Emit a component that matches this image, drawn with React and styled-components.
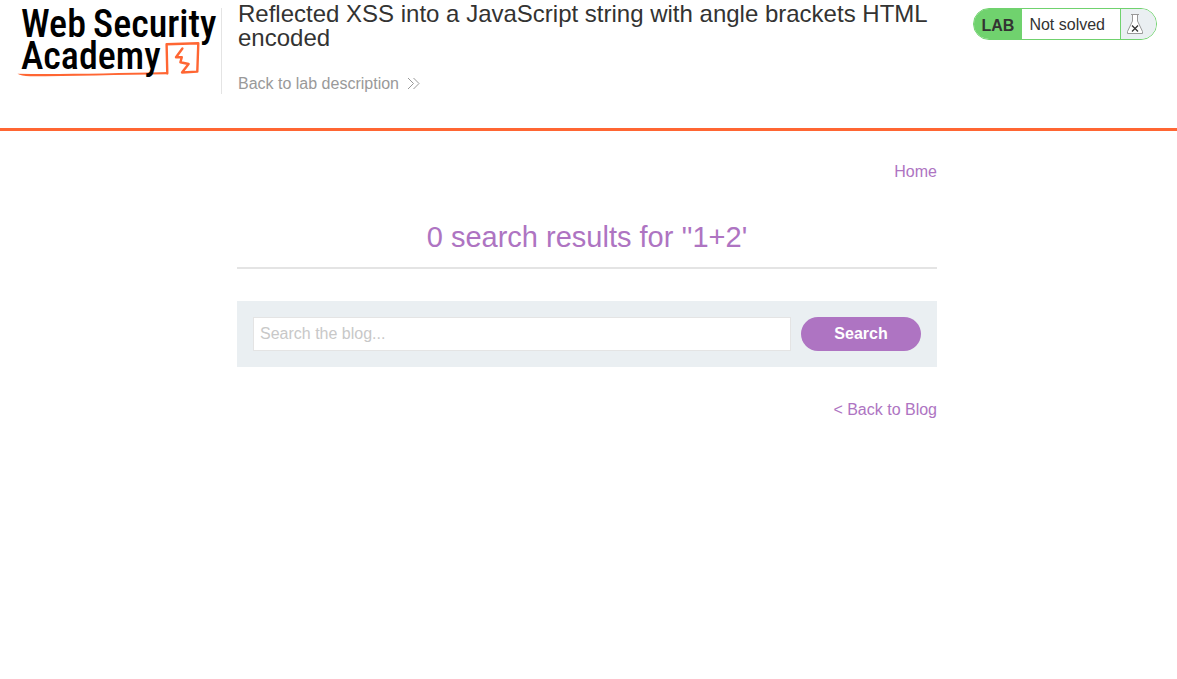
import React from 'react';
import styled, { createGlobalStyle } from 'styled-components';

const colors = {
  orange: '#ff6633',
  purple: '#ae74c2',
  green: '#70d26e',
  ink: '#333332',
  muted: '#999999',
  line: '#e4e4e4',
  panel: '#eaeff2',
};

const GlobalStyle = createGlobalStyle`
  *, *::before, *::after { box-sizing: border-box; }
  body {
    margin: 0;
    background: #fff;
    color: ${colors.ink};
    font-family: "Liberation Sans", Arial, sans-serif;
    font-size: 16px;
    line-height: 24px;
  }
`;

const Header = styled.header`
  display: flex;
  align-items: flex-start;
  min-height: 131px;
  padding: 0 20px 24px 16px;
  border-bottom: 3px solid ${colors.orange};
`;

const LogoLink = styled.a`
  flex: none;
  display: block;
  margin-top: 8px;
  border-right: 1px solid ${colors.line};
  color: #000;

  svg { display: block; overflow: visible; }
`;

const LogoText = styled.text`
  font-family: "Roboto Condensed", Roboto, "Liberation Sans Narrow", sans-serif;
  font-size: 38px;
  font-weight: 500;
  fill: currentColor;
`;

const TitleBlock = styled.div`
  flex: 1;
  min-width: 0;
  padding: 2px 32px 0 16px;
`;

const Title = styled.h2`
  margin: 0 0 22px;
  font-size: 24px;
  line-height: 24px;
  font-weight: 400;
`;

const DescriptionLink = styled.a`
  display: inline-flex;
  align-items: center;
  gap: 8px;
  color: ${colors.muted};
  text-decoration: none;
`;

const Status = styled.div`
  flex: none;
  display: flex;
  height: 32px;
  margin-top: 8px;
  overflow: hidden;
  border: 1px solid ${colors.green};
  border-radius: 16px;
  line-height: 32px;
`;

const StatusTag = styled.span`
  padding: 0 8px;
  background: ${colors.green};
  font-weight: 700;
  line-height: 34px;
`;

const StatusText = styled.p`
  margin: 0;
  padding: 0 15px 0 7px;
`;

const StatusIcon = styled.span`
  display: flex;
  align-items: center;
  width: 36px;
  padding-left: 5px;
  border-left: 1px solid ${colors.green};
  background: ${colors.panel};
`;

const Main = styled.main`
  padding: 29px 19px 32px 16px;
`;

const Column = styled.div`
  max-width: 700px;
  margin: 0 auto;
`;

const LinkRow = styled.nav`
  text-align: right;
`;

const PurpleLink = styled.a`
  color: ${colors.purple};
  text-decoration: none;
`;

const ResultsHeader = styled.header`
  margin: 32px 0;
  padding-bottom: 9px;
  border-bottom: 2px solid ${colors.line};
`;

const ResultsTitle = styled.h1`
  margin: 0;
  color: ${colors.purple};
  font-size: 29px;
  line-height: 42px;
  font-weight: 400;
  text-align: center;
`;

const SearchForm = styled.form`
  display: flex;
  gap: 10px;
  margin-bottom: 31px;
  padding: 16px;
  background: ${colors.panel};
`;

const SearchInput = styled.input`
  flex: 1;
  min-width: 0;
  height: 34px;
  padding: 0 6px;
  border: 1px solid ${colors.line};
  background: #fff;
  color: ${colors.ink};
  font: inherit;

  &::placeholder { color: #c8c8c8; opacity: 1; }
`;

const SearchButton = styled.button`
  width: 120px;
  height: 34px;
  padding: 0;
  border: 0;
  border-radius: 17px;
  background: ${colors.purple};
  color: #fff;
  font: inherit;
  font-weight: 700;
`;

function Logo() {
  return (
    <svg width="205" height="86" viewBox="16 8 205 86" role="img" aria-label="Web Security Academy">
      <path
        d="M167.300 73.200L166.600 44.300L198.300 43.300L197.300 71.600L182 72.500L188.600 64L180.400 62.300L181.800 57.200L176 57.200L182.400 48.500"
        fill="none"
        stroke={colors.orange}
        strokeWidth="2.400"
        strokeLinejoin="round"
        strokeLinecap="round"
      />
      <path d="M17.500 73.800C60 74.600 110 73.300 168 72L168 74.200C120 74.600 70 76.200 30 76.300C24 76.200 20 75.500 17.500 73.800Z" fill={colors.orange} />
      <LogoText x="21" y="37">Web</LogoText>
      <LogoText x="93" y="37">Security</LogoText>
      <LogoText x="21" y="69">Academy</LogoText>
    </svg>
  );
}

function DoubleChevron() {
  return (
    <svg width="14" height="14" viewBox="0 0 14 14" fill="none" stroke={colors.muted} strokeWidth="1" aria-hidden="true">
      <path d="M1 1L6.500 6.500L1 12M6.500 1L12 6.500L6.500 12" />
    </svg>
  );
}

function Flask() {
  return (
    <svg width="18" height="22" viewBox="0 0 18 22" fill="none" aria-hidden="true">
      <path d="M6.500 1.500V8L1.500 18.500V20.500H16.500V18.500L11.500 8V1.500Z" fill="#fff" stroke="#999" />
      <path d="M5 1.500H13" stroke="#999" />
      <path d="M6 12.500L12 18.500M12 12.500L6 18.500" stroke="#333" strokeWidth="1.300" />
    </svg>
  );
}

export default function App() {
  return (
    <>
      <GlobalStyle />
      <Header>
        <LogoLink href="#academy"><Logo /></LogoLink>
        <TitleBlock>
          <Title>Reflected XSS into a JavaScript string with angle brackets HTML encoded</Title>
          <DescriptionLink href="#description">
            Back to lab description
            <DoubleChevron />
          </DescriptionLink>
        </TitleBlock>
        <Status>
          <StatusTag>LAB</StatusTag>
          <StatusText>Not solved</StatusText>
          <StatusIcon><Flask /></StatusIcon>
        </Status>
      </Header>
      <Main>
        <Column>
          <LinkRow aria-label="Site"><PurpleLink href="#home">Home</PurpleLink></LinkRow>
          <ResultsHeader>
            <ResultsTitle>0 search results for ''1+2'</ResultsTitle>
          </ResultsHeader>
          <SearchForm role="search" onSubmit={(event) => event.preventDefault()}>
            <SearchInput type="text" name="search" aria-label="Search the blog" placeholder="Search the blog..." />
            <SearchButton type="submit">Search</SearchButton>
          </SearchForm>
          <LinkRow aria-label="Blog"><PurpleLink href="#blog">&lt; Back to Blog</PurpleLink></LinkRow>
        </Column>
      </Main>
    </>
  );
}
